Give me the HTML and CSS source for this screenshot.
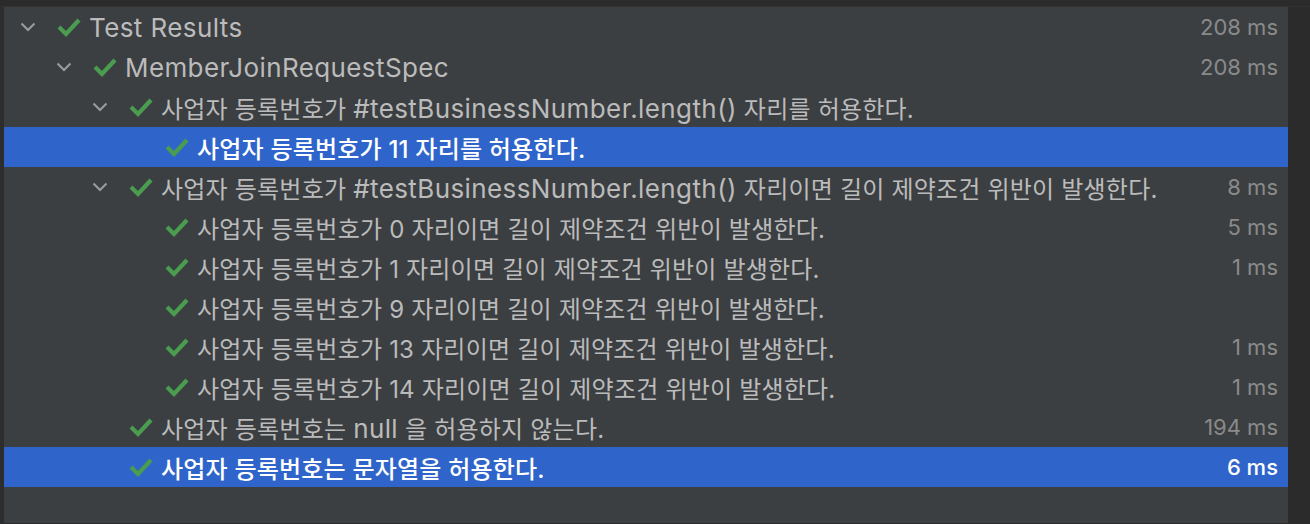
FILE: index.html
```html
<!DOCTYPE html>
<html lang="ko">
  <head>
    <meta charset="UTF-8" />
    <title>Test Results</title>
    <link rel="stylesheet" href="styles.css">
  </head>
  <body>
    <div class="topbar"></div>
    <div class="main">
      <div class="edge"></div>
      <div class="tree">
        <div class="row lvl0">
          <span class="arrow"><svg width="16" height="10" viewBox="0 0 16 10"><path d="M1.5 1.5 L8 8 L14.5 1.5" /></svg></span>
          <span class="check"><svg width="24" height="20" viewBox="0 0 24 20"><path d="M2 10 L9 17 L22 3" /></svg></span>
          <span class="name"><span class="en">Test Results</span></span>
          <span class="time">208 ms</span>
        </div>
        <div class="row lvl1">
          <span class="arrow"><svg width="16" height="10" viewBox="0 0 16 10"><path d="M1.5 1.5 L8 8 L14.5 1.5" /></svg></span>
          <span class="check"><svg width="24" height="20" viewBox="0 0 24 20"><path d="M2 10 L9 17 L22 3" /></svg></span>
          <span class="name"><span class="en">MemberJoinRequestSpec</span></span>
          <span class="time">208 ms</span>
        </div>
        <div class="row lvl2">
          <span class="arrow"><svg width="16" height="10" viewBox="0 0 16 10"><path d="M1.5 1.5 L8 8 L14.5 1.5" /></svg></span>
          <span class="check"><svg width="24" height="20" viewBox="0 0 24 20"><path d="M2 10 L9 17 L22 3" /></svg></span>
          <span class="name">사업자 등록번호가 <span class="en">#testBusinessNumber.length()</span> 자리를 허용한다.</span>
          <span class="time"></span>
        </div>
        <div class="row lvl3 selected">
          <span class="check"><svg width="24" height="20" viewBox="0 0 24 20"><path d="M2 10 L9 17 L22 3" /></svg></span>
          <span class="name">사업자 등록번호가 11 자리를 허용한다.</span>
          <span class="time"></span>
        </div>
        <div class="row lvl2">
          <span class="arrow"><svg width="16" height="10" viewBox="0 0 16 10"><path d="M1.5 1.5 L8 8 L14.5 1.5" /></svg></span>
          <span class="check"><svg width="24" height="20" viewBox="0 0 24 20"><path d="M2 10 L9 17 L22 3" /></svg></span>
          <span class="name">사업자 등록번호가 <span class="en">#testBusinessNumber.length()</span> 자리이면 길이 제약조건 위반이 발생한다.</span>
          <span class="time">8 ms</span>
        </div>
        <div class="row lvl3">
          <span class="check"><svg width="24" height="20" viewBox="0 0 24 20"><path d="M2 10 L9 17 L22 3" /></svg></span>
          <span class="name">사업자 등록번호가 0 자리이면 길이 제약조건 위반이 발생한다.</span>
          <span class="time">5 ms</span>
        </div>
        <div class="row lvl3">
          <span class="check"><svg width="24" height="20" viewBox="0 0 24 20"><path d="M2 10 L9 17 L22 3" /></svg></span>
          <span class="name">사업자 등록번호가 1 자리이면 길이 제약조건 위반이 발생한다.</span>
          <span class="time">1 ms</span>
        </div>
        <div class="row lvl3">
          <span class="check"><svg width="24" height="20" viewBox="0 0 24 20"><path d="M2 10 L9 17 L22 3" /></svg></span>
          <span class="name">사업자 등록번호가 9 자리이면 길이 제약조건 위반이 발생한다.</span>
          <span class="time"></span>
        </div>
        <div class="row lvl3">
          <span class="check"><svg width="24" height="20" viewBox="0 0 24 20"><path d="M2 10 L9 17 L22 3" /></svg></span>
          <span class="name">사업자 등록번호가 13 자리이면 길이 제약조건 위반이 발생한다.</span>
          <span class="time">1 ms</span>
        </div>
        <div class="row lvl3">
          <span class="check"><svg width="24" height="20" viewBox="0 0 24 20"><path d="M2 10 L9 17 L22 3" /></svg></span>
          <span class="name">사업자 등록번호가 14 자리이면 길이 제약조건 위반이 발생한다.</span>
          <span class="time">1 ms</span>
        </div>
        <div class="row lvl2 leaf">
          <span class="check"><svg width="24" height="20" viewBox="0 0 24 20"><path d="M2 10 L9 17 L22 3" /></svg></span>
          <span class="name">사업자 등록번호는 <span class="en">null</span> 을 허용하지 않는다.</span>
          <span class="time">194 ms</span>
        </div>
        <div class="row lvl2 leaf selected">
          <span class="check"><svg width="24" height="20" viewBox="0 0 24 20"><path d="M2 10 L9 17 L22 3" /></svg></span>
          <span class="name">사업자 등록번호는 문자열을 허용한다.</span>
          <span class="time">6 ms</span>
        </div>
      </div>
      <div class="gutter"></div>
    </div>
  </body>
</html>
```

FILE: styles.css
```css
* {
  margin: 0;
  padding: 0;
  box-sizing: border-box;
}

body {
  background: #2b2b2b;
  width: 1310px;
  height: 524px;
  overflow: hidden;
  font-family: Inter, "Noto Sans CJK KR", sans-serif;
  font-size: 22px;
}

.topbar {
  height: 7px;
  background: #2b2b2b;
  border-bottom: 1px solid #323232;
}

.main {
  display: flex;
  height: 516px;
}

.edge {
  width: 4px;
  background: #2d2d2d;
}

.tree {
  flex: 1;
  background: #3b3f42;
}

.gutter {
  width: 22px;
  background: #2b2b2b;
}

.row {
  height: 40px;
  display: flex;
  align-items: center;
  color: #bbbbbb;
  padding-right: 10px;
}

.lvl0 { padding-left: 13px; }
.lvl1 { padding-left: 49px; }
.lvl2 { padding-left: 85px; }
.lvl2.leaf { padding-left: 121px; }
.lvl3 { padding-left: 157px; }

.arrow {
  width: 36px;
  display: flex;
  align-items: center;
  padding-left: 3px;
}

.arrow path {
  fill: none;
  stroke: #9c9c9c;
  stroke-width: 2;
}

.check {
  width: 36px;
  display: flex;
  align-items: center;
  padding-left: 4px;
}

.check path {
  fill: none;
  stroke: #4a9c4f;
  stroke-width: 4.2;
}

.name {
  flex: 1;
  white-space: nowrap;
  font-size: 24px;
  letter-spacing: 0.2px;
}

.en {
  font-size: 26px;
  letter-spacing: 0.4px;
}

.time {
  color: #8a8a8a;
  white-space: nowrap;
}

.selected {
  background: #2f65ca;
  color: #ffffff;
  font-weight: 500;
}

.selected .time {
  color: #ffffff;
}
```
